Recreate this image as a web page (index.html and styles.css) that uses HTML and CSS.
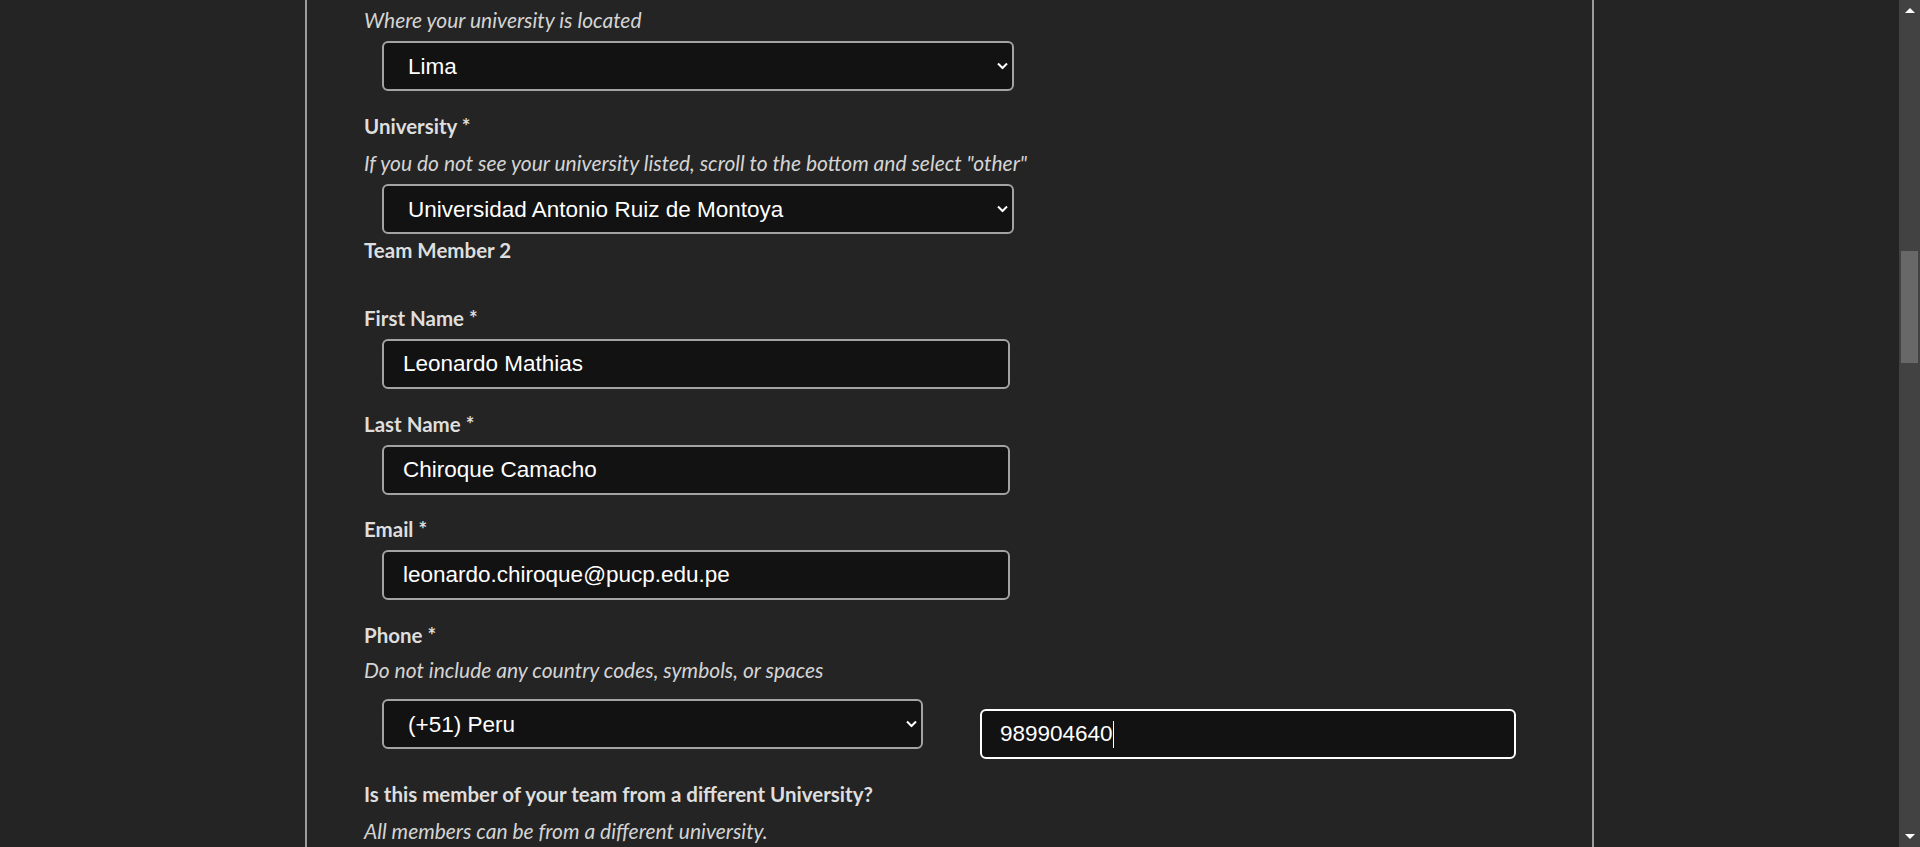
FILE: index.html
```html
<!DOCTYPE html>
<html lang="en">
<head>
<meta charset="utf-8">
<title>Team registration</title>
<link rel="stylesheet" href="styles.css">
</head>
<body>
<div class="viewport">
  <main class="sheet">
    <div class="form">
      <p class="hint first">Where your university is located</p>
      <div class="select-wrap wide">
        <select class="control"><option>Lima</option></select>
        <svg class="chev" viewBox="0 0 11 7" width="11" height="7"><path d="M1 1 L5.5 5.5 L10 1" fill="none" stroke="#fff" stroke-width="2"/></svg>
      </div>

      <label class="label">University *</label>
      <p class="hint">If you do not see your university listed, scroll to the bottom and select "other"</p>
      <div class="select-wrap wide">
        <select class="control"><option>Universidad Antonio Ruiz de Montoya</option></select>
        <svg class="chev" viewBox="0 0 11 7" width="11" height="7"><path d="M1 1 L5.5 5.5 L10 1" fill="none" stroke="#fff" stroke-width="2"/></svg>
      </div>

      <h3 class="label section">Team Member 2</h3>

      <label class="label spaced">First Name *</label>
      <input class="control text" type="text" value="Leonardo Mathias">

      <label class="label">Last Name *</label>
      <input class="control text" type="text" value="Chiroque Camacho">

      <label class="label snug">Email *</label>
      <input class="control text" type="text" value="leonardo.chiroque@pucp.edu.pe">

      <label class="label">Phone *</label>
      <p class="hint tight">Do not include any country codes, symbols, or spaces</p>
      <div class="phone-row">
        <div class="select-wrap code">
          <select class="control"><option>(+51) Peru</option></select>
          <svg class="chev" viewBox="0 0 11 7" width="11" height="7"><path d="M1 1 L5.5 5.5 L10 1" fill="none" stroke="#fff" stroke-width="2"/></svg>
        </div>
        <div class="phone-wrap">
          <input class="control phone" type="text" value="989904640">
          <span class="caret"></span>
        </div>
      </div>

      <label class="label question">Is this member of your team from a different University?</label>
      <p class="hint">All members can be from a different university.</p>
    </div>
  </main>
  <aside class="scrollbar">
    <div class="arrow up"></div>
    <div class="track">
      <div class="thumb"></div>
    </div>
    <div class="arrow down"></div>
  </aside>
</div>
</body>
</html>
```
FILE: styles.css
```css
html, body {
  margin: 0;
  padding: 0;
  height: 100%;
  background: #242424;
  overflow: hidden;
}

.viewport {
  display: flex;
  height: 847px;
}

.sheet {
  flex: 1;
  display: flex;
  justify-content: center;
  align-items: stretch;
}

.form {
  width: 1228px;
  border-left: 2px solid #9c9c9c;
  border-right: 2px solid #9c9c9c;
  padding: 8px 0 0 57px;
  box-sizing: content-box;
  display: flex;
  flex-direction: column;
  align-items: flex-start;
  overflow: hidden;
  font-family: Lato, "Open Sans", sans-serif;
}

.form > * {
  flex-shrink: 0;
}

.hint {
  margin: 13px 0 0;
  font-style: italic;
  font-size: 21px;
  line-height: 24px;
  color: #d4d4d4;
  white-space: nowrap;
}

.hint.first {
  margin-top: 0;
}

.hint.tight {
  margin-top: 11px;
}

.label {
  display: block;
  margin: 23px 0 0;
  font-size: 20.5px;
  font-weight: 700;
  line-height: 24px;
  color: #dedede;
  white-space: nowrap;
}

.label.snug {
  margin-top: 22px;
}

.label.section {
  margin-top: 4px;
}

.label.spaced {
  margin-top: 44px;
}

.label.question {
  margin-top: 23px;
}

.control {
  box-sizing: border-box;
  height: 50px;
  margin: 0;
  background: #121212;
  border: 2px solid #a3a3a3;
  border-radius: 6px;
  color: #ffffff;
  font-family: "Liberation Sans", Arial, sans-serif;
  font-size: 22.5px;
  outline: none;
}

.text {
  width: 628px;
  margin: 9px 0 0 18px;
  padding: 0 19px;
}

.select-wrap {
  position: relative;
  margin: 9px 0 0 18px;
  height: 50px;
}

.select-wrap.wide {
  width: 632px;
}

.select-wrap .control {
  width: 100%;
  -webkit-appearance: none;
  appearance: none;
  padding: 0 40px 0 24px;
}

.chev {
  position: absolute;
  right: 6px;
  top: 50%;
  transform: translateY(-50%);
  pointer-events: none;
}

.phone-row {
  display: flex;
  align-items: flex-start;
  gap: 57px;
  margin: 17px 0 0 18px;
}

.phone-row .select-wrap {
  margin: 0;
}

.select-wrap.code {
  width: 541px;
}

.phone-wrap {
  position: relative;
  margin-top: 10px;
}

.phone {
  width: 536px;
  padding: 0 18px;
  border-color: #ffffff;
}

.caret {
  position: absolute;
  left: 133px;
  top: 12px;
  width: 1px;
  height: 27px;
  background: #ffffff;
}

.scrollbar {
  width: 21px;
  flex: none;
  background: #424242;
  display: flex;
  flex-direction: column;
  align-items: center;
}

.arrow {
  flex: none;
  height: 21px;
  width: 21px;
  display: flex;
  align-items: center;
  justify-content: center;
}

.arrow::before {
  content: "";
  width: 0;
  height: 0;
  border-left: 5px solid transparent;
  border-right: 5px solid transparent;
}

.arrow.up::before {
  border-bottom: 5px solid #ffffff;
  margin-top: -1px;
}

.arrow.down::before {
  border-top: 5px solid #ffffff;
}

.track {
  flex: 1;
  width: 100%;
  padding-top: 230px;
  box-sizing: border-box;
  display: flex;
  justify-content: center;
  align-items: flex-start;
}

.thumb {
  width: 17px;
  height: 112px;
  background: #686868;
}
```
